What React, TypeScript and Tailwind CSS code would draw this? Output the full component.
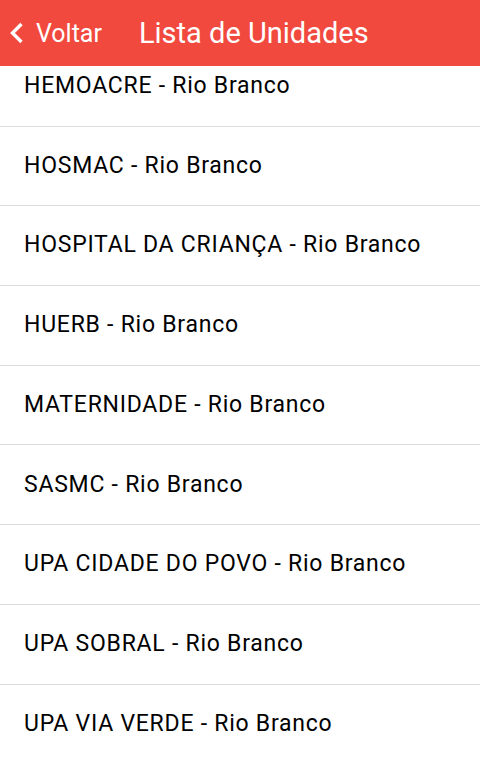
const unidades = [
  "HEMOACRE - Rio Branco",
  "HOSMAC - Rio Branco",
  "HOSPITAL DA CRIANÇA - Rio Branco",
  "HUERB - Rio Branco",
  "MATERNIDADE - Rio Branco",
  "SASMC - Rio Branco",
  "UPA CIDADE DO POVO - Rio Branco",
  "UPA SOBRAL - Rio Branco",
  "UPA VIA VERDE - Rio Branco",
];

const BackArrow = () => (
  <svg width="16" height="22" viewBox="0 0 16 22" fill="none">
    <path d="M12.5 2 L3.5 11 L12.5 20" stroke="white" strokeWidth="3.4" strokeLinecap="butt" strokeLinejoin="miter" />
  </svg>
);

export default function App() {
  return (
    <div className="flex h-[762px] w-[480px] flex-col overflow-hidden bg-white font-['Roboto',sans-serif]">
      <header className="relative z-10 flex h-[66px] shrink-0 items-center bg-[#f1493e] text-white">
        <button className="flex items-center pl-[9px] text-[25px] leading-none">
          <BackArrow />
          <span className="ml-[11px]">Voltar</span>
        </button>
        <h1 className="ml-[37px] text-[29px] leading-none">Lista de Unidades</h1>
      </header>
      <main className="flex-1 overflow-hidden">
        <ul className="-mt-[19px]">
          {unidades.map((nome) => (
            <li
              key={nome}
              className="flex h-[79.7px] items-center border-b border-[#dcdcdc] pl-6 text-[23px] tracking-[0.75px] text-black"
            >
              {nome}
            </li>
          ))}
        </ul>
      </main>
    </div>
  );
}
